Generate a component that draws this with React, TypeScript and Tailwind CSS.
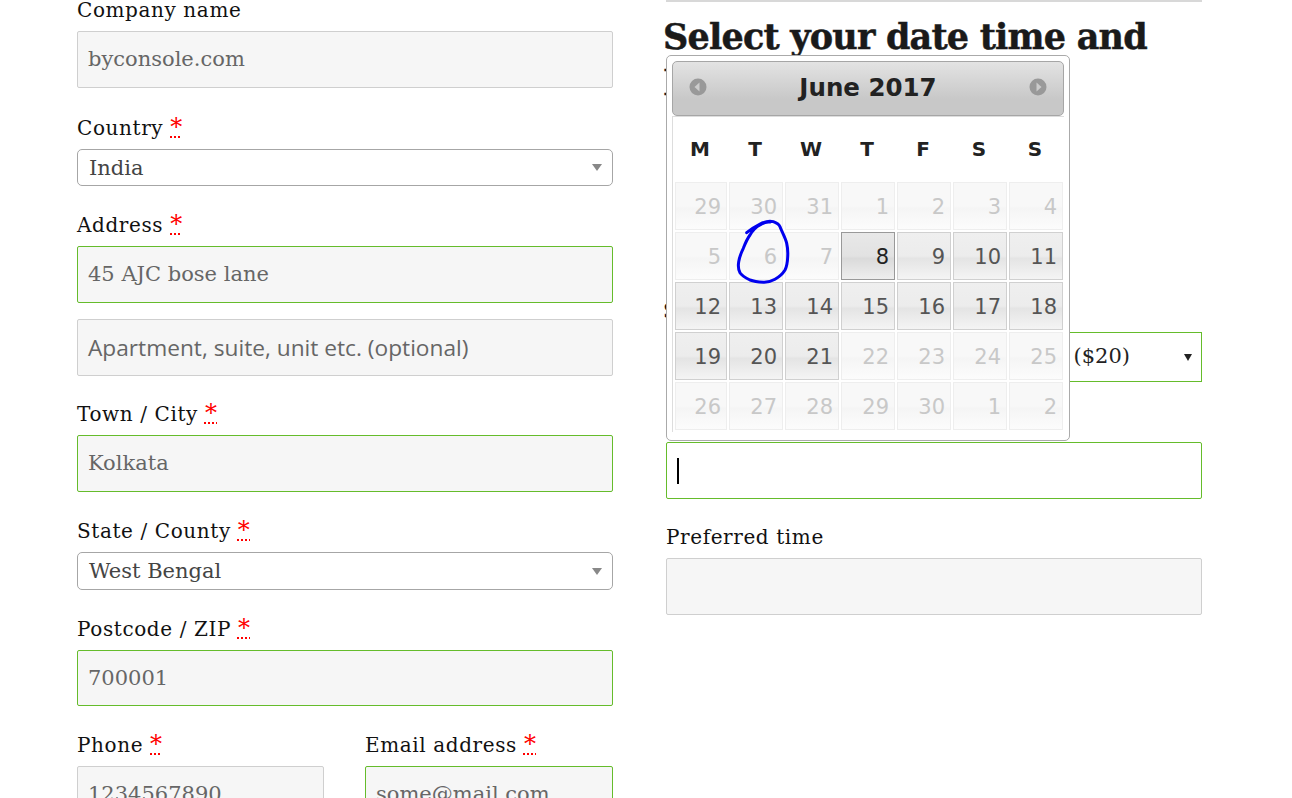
import React from 'react';

const serif = "font-['DejaVu_Serif','Liberation_Serif',serif]";

const Req = () => (
  <abbr className="text-[24px] leading-[0] text-[#ff0000] underline decoration-dotted decoration-[2px] underline-offset-[1px] decoration-[#ff0000]">*</abbr>
);

const Label: React.FC<{ text: string; required?: boolean; className?: string }> = ({ text, required, className }) => (
  <div className={`h-[28px] leading-[30px] mb-[8px] text-[20px] tracking-[0.6px] text-[#111] whitespace-nowrap ${className ?? ''}`}>
    {text} {required && <Req />}
  </div>
);

const TextBox: React.FC<{ value?: string; green?: boolean; h?: string; sans?: boolean }> = ({ value, green, h = 'h-[57px]', sans }) => (
  <div
    className={`${h} flex items-center px-[10px] pt-[1px] rounded-[2px] border bg-[#f6f6f6] text-[#666] whitespace-nowrap overflow-hidden ${
      green ? 'border-[#65bc2b]' : 'border-[#cfcfcf]'
    } ${sans ? "font-['Open_Sans',sans-serif] text-[22.7px]" : 'text-[21px]'}`}
  >
    {value}
  </div>
);

const SelectBox: React.FC<{ value: string; h: string }> = ({ value, h }) => (
  <div className={`${h} flex items-center justify-between pl-[11px] pr-[10px] rounded-[5px] border border-[#a6a6a6] bg-white text-[#444] text-[21px]`}>
    <span className="mt-[2px]">{value}</span>
    <span className="w-0 h-0 border-x-[5px] border-x-transparent border-t-[7px] border-t-[#888]" />
  </div>
);

const LeftColumn = () => (
  <div className="w-[536px] shrink-0 -mt-[5px]">
    <Label text="Company name" />
    <TextBox value="byconsole.com" />
    <div className="mt-[25px]">
      <Label text="Country" required />
      <SelectBox value="India" h="h-[37px]" />
    </div>
    <div className="mt-[24px]">
      <Label text="Address" required />
      <TextBox value="45 AJC bose lane" green />
    </div>
    <div className="mt-[16px]">
      <TextBox value="Apartment, suite, unit etc. (optional)" sans />
    </div>
    <div className="mt-[23px]">
      <Label text="Town / City" required />
      <TextBox value="Kolkata" green />
    </div>
    <div className="mt-[24px]">
      <Label text="State / County" required />
      <SelectBox value="West Bengal" h="h-[38px]" />
    </div>
    <div className="mt-[24px]">
      <Label text="Postcode / ZIP" required />
      <TextBox value="700001" green h="h-[56px]" />
    </div>
    <div className="mt-[24px] flex gap-[41px]">
      <div className="w-[247px]">
        <Label text="Phone" required />
        <TextBox value="1234567890" />
      </div>
      <div className="w-[248px]">
        <Label text="Email address" required />
        <TextBox value="some@mail.com" green />
      </div>
    </div>
  </div>
);

const RightColumn = () => (
  <div className="w-[536px] shrink-0">
    <div className="h-[2px] border-b-2 border-[#d8d8d8]" />
    <h2 className="-ml-[3px] mt-[12px] h-[92px] text-[35px] leading-[46px] font-bold text-[#1a1a1a] tracking-[-0.8px] [-webkit-text-stroke:0.5px_#1a1a1a]">
      Select your date time and Delivery
    </h2>
    <div className="mt-[190px]">
      <Label text="Select delivery type" className="-ml-[3px]" />
      <div className="h-[50px] flex items-center border border-[#65bc2b] bg-white text-[21px] text-[#222]">
        <span className="ml-auto mr-[54px]">Express ($20)</span>
        <span className="mr-[9px] w-0 h-0 border-x-[4px] border-x-transparent border-t-[7px] border-t-[#222]" />
      </div>
    </div>
    <div className="mt-[24px]">
      <Label text="Preferred date" />
      <div className="h-[57px] flex items-center pl-[10px] rounded-[2px] border border-[#65bc2b] bg-white">
        <span className="w-[2px] h-[26px] bg-black" />
      </div>
    </div>
    <div className="mt-[23px]">
      <Label text="Preferred time" />
      <TextBox />
    </div>
  </div>
);

type Day = { n: number; kind: 'off' | 'on' | 'sel' };

const off = (n: number): Day => ({ n, kind: 'off' });
const on = (n: number): Day => ({ n, kind: 'on' });

const days: Day[] = [
  ...[29, 30, 31, 1, 2, 3, 4, 5, 6, 7].map(off),
  { n: 8, kind: 'sel' },
  ...[9, 10, 11, 12, 13, 14, 15, 16, 17, 18, 19, 20, 21].map(on),
  ...[22, 23, 24, 25, 26, 27, 28, 29, 30, 1, 2].map(off),
];

const dayClass = {
  off: 'border-[#eeeeee] text-[#c8c8c8] bg-[linear-gradient(#f8f8f8,#f8f8f8_50%,#f5f5f5_55%,#fcfcfc)]',
  on: 'border-[#d0d0d0] text-[#555] bg-[linear-gradient(#efefef,#ececec_50%,#e4e4e4_55%,#f4f4f4)]',
  sel: 'border-[#999999] text-[#222] bg-[linear-gradient(#e8e8e8,#e2e2e2_50%,#dadada_55%,#eeeeee)]',
};

const NavIcon: React.FC<{ flip?: boolean }> = ({ flip }) => (
  <svg width="18" height="18" viewBox="0 0 18 18" className={flip ? 'rotate-180 -mt-[4px]' : '-mt-[4px]'}>
    <circle cx="9" cy="9" r="8.5" fill="#999" />
    <path d="M5.5 9 10.5 4.5V13.5Z" fill="#ccc" />
  </svg>
);

const Calendar = () => (
  <div className="absolute left-[666px] top-[55px] w-[404px] h-[386px] p-[5px] rounded-[5px] border border-[#aaa] bg-white font-['DejaVu_Sans',Verdana,sans-serif]">
    <div className="h-[55px] flex items-center justify-between px-[16px] rounded-[5px] border border-[#a6a6a6] bg-[linear-gradient(#e3e3e3,#c8c8c8_70%)]">
      <NavIcon />
      <span className="text-[24.5px] font-bold text-[#222]">June 2017</span>
      <NavIcon flip />
    </div>
    <div className="h-[316px] border-l border-t border-[#ddd]">
      <div className="grid grid-cols-[52px_repeat(6,54px)] gap-x-[2px] ml-[2px] h-[63px] mb-[2px] items-center text-center text-[20px] font-bold text-[#222]">
        {['M', 'T', 'W', 'T', 'F', 'S', 'S'].map((d, i) => (
          <span key={i} className="-ml-[2px]">{d}</span>
        ))}
      </div>
      <div className="grid grid-cols-[52px_repeat(6,54px)] grid-rows-[repeat(5,48px)] gap-[2px] ml-[2px]">
        {days.map((d, i) => (
          <div key={i} className={`flex items-center justify-end pr-[5px] pt-[4px] border text-[21px] ${dayClass[d.kind]}`}>
            {d.n}
          </div>
        ))}
      </div>
    </div>
    {/* hand drawn mark around the 6th */}
    <svg className="absolute left-[68px] top-[162px]" width="60" height="70" viewBox="0 0 60 70" fill="none">
      <path
        d="M11.7 14.7C16 11 21 8 25 6C30 3.500 35 2.500 38.300 3.700C42 5 44 6 45 8.700C47 14 50.500 20 51.700 25.300C52.800 30 53 34 52.700 38.700C52.500 44 52 48 50 52C47 57 44 59 40 61.300C36 63.500 32 64.500 28.300 64.300C23 64 19 63.500 15 62C11 60 7 58 5 54.700C3.500 52 3 48 3.700 43.700C4.500 39 6 35 8.300 30.300C10 26 12 21 15 17C18 12 21 9 25 7C28 5 32 3.500 35 4"
        stroke="#0000ee"
        strokeWidth="3"
        strokeLinecap="round"
        strokeLinejoin="round"
      />
    </svg>
  </div>
);

export default function App() {
  return (
    <div className={`relative h-[798px] overflow-hidden bg-white ${serif}`}>
      <div className="flex pl-[77px] gap-[53px]">
        <LeftColumn />
        <RightColumn />
      </div>
      <Calendar />
    </div>
  );
}
